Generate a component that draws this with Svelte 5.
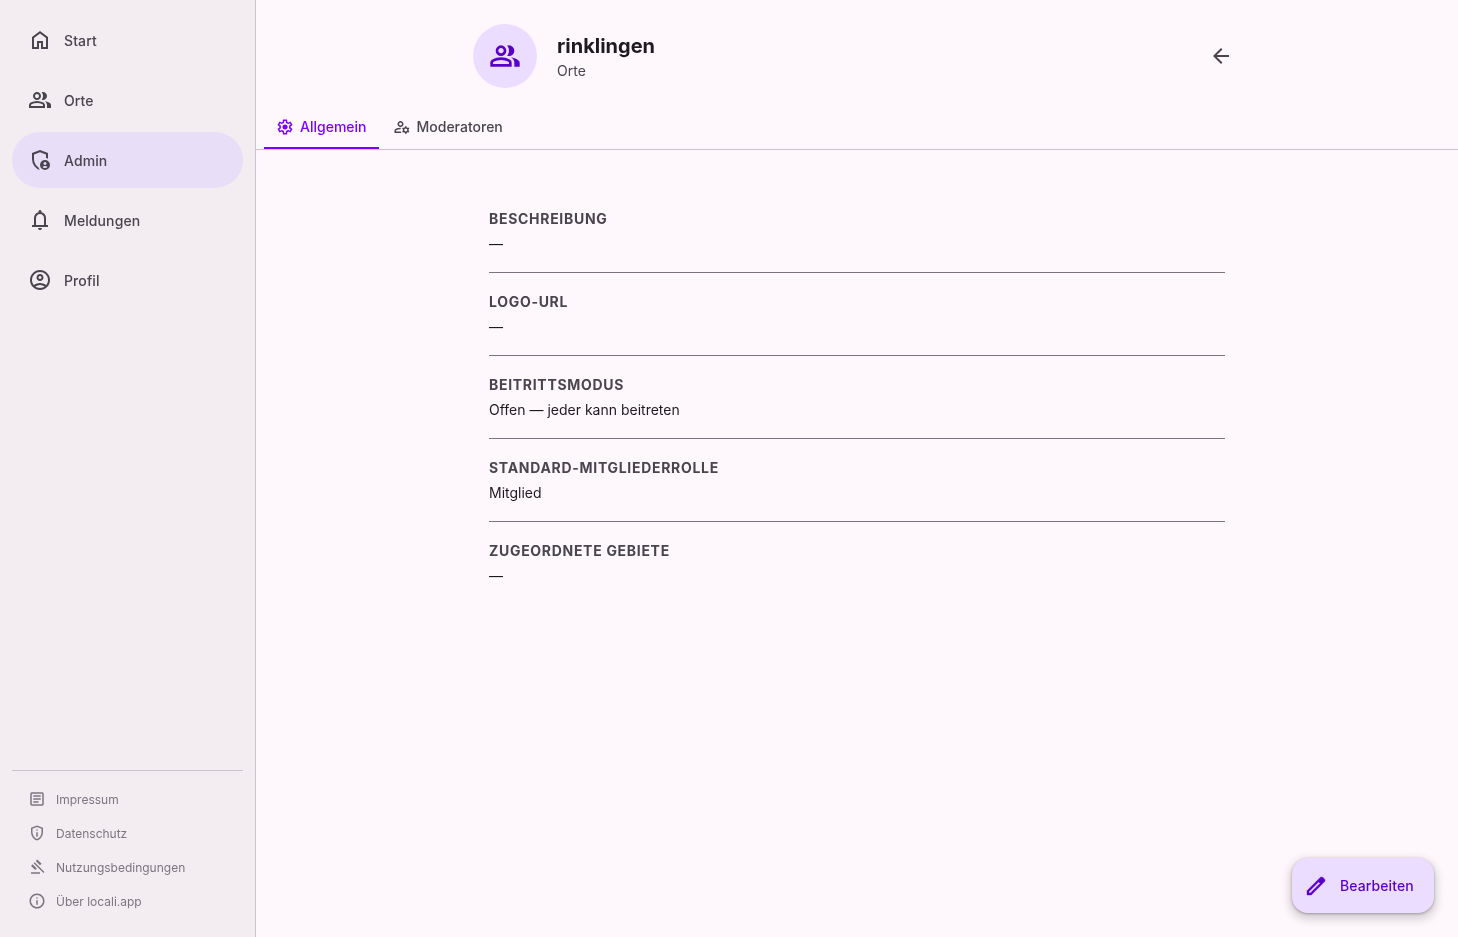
<script>
  const icons = {
    home: 'M240-200h120v-240h240v240h120v-360L480-740 240-560v360Zm-80 80v-480l320-240 320 240v480H520v-240h-80v240H160Z',
    group: 'M40-160v-112q0-34 17.5-62.5T104-378q62-31 126-46.5T360-440q66 0 130 15.5T616-378q29 15 46.5 43.5T680-272v112H40Zm720 0v-120q0-44-24.5-84.5T666-434q51 6 96 20.5t84 35.5q36 20 55 44.5t19 53.5v120H760ZM360-480q-66 0-113-47t-47-113q0-66 47-113t113-47q66 0 113 47t47 113q0 66-47 113t-113 47Zm400-160q0 66-47 113t-113 47q-11 0-28-2.5t-28-5.5q27-32 41.5-71t14.5-81q0-42-14.5-81T544-792q14-5 28-6.5t28-1.5q66 0 113 47t47 113ZM120-240h480v-32q0-11-5.5-20T580-306q-54-27-109-40.5T360-360q-56 0-111 13.5T140-306q-9 5-14.5 14t-5.5 20v32Zm240-320q33 0 56.5-23.5T440-640q0-33-23.5-56.5T360-720q-33 0-56.5 23.5T280-640q0 33 23.5 56.5T360-560Z',
    admin: 'M680-280q25 0 42.5-17.5T740-340q0-25-17.5-42.5T680-400q-25 0-42.5 17.5T620-340q0 25 17.5 42.5T680-280Zm0 120q31 0 57-14.5t42-38.5q-22-13-47-20t-52-7q-27 0-52 7t-47 20q16 24 42 38.5t57 14.5ZM480-80q-139-35-229.5-159.5T160-516v-244l320-120 320 120v227q-19-8-39-14.5t-41-9.5v-147l-240-90-240 90v188q0 47 12.5 94t35 89.5Q310-290 342-254t71 60q11 32 29 61t41 52q-1 0-1.5.5t-1.5.5Zm200 0q-83 0-141.5-58.5T480-280q0-83 58.5-141.5T680-480q83 0 141.5 58.5T880-280q0 83-58.5 141.5T680-80ZM480-494Z',
    bell: 'M160-200v-80h80v-280q0-83 50-147.5T420-792v-28q0-25 17.5-42.5T480-880q25 0 42.5 17.5T540-820v28q80 20 130 84.5T720-560v280h80v80H160Zm320-300Zm0 420q-33 0-56.5-23.5T400-160h160q0 33-23.5 56.5T480-80ZM320-280h320v-280q0-66-47-113t-113-47q-66 0-113 47t-47 113v280Z',
    account: 'M234-276q51-39 114-61.5T480-360q69 0 132 22.5T726-276q35-41 54.5-93T800-480q0-133-93.5-226.5T480-800q-133 0-226.5 93.5T160-480q0 59 19.5 111t54.5 93Zm246-164q-59 0-99.5-40.5T340-580q0-59 40.5-99.5T480-720q59 0 99.5 40.5T620-580q0 59-40.5 99.5T480-440Zm0 360q-83 0-156-31.5T197-197q-54-54-85.5-127T80-480q0-83 31.5-156T197-763q54-54 127-85.5T480-880q83 0 156 31.5T763-763q54 54 85.5 127T880-480q0 83-31.5 156T763-197q-54 54-127 85.5T480-80Zm0-80q53 0 100-15.5t86-44.5q-39-29-86-44.5T480-280q-53 0-100 15.5T294-220q39 29 86 44.5T480-160Zm0-360q26 0 43-17t17-43q0-26-17-43t-43-17q-26 0-43 17t-17 43q0 26 17 43t43 17Zm0-60Zm0 360Z',
    article: 'M280-280h280v-80H280v80Zm0-160h400v-80H280v80Zm0-160h400v-80H280v80Zm-80 480q-33 0-56.5-23.5T120-200v-560q0-33 23.5-56.5T200-840h560q33 0 56.5 23.5T840-760v560q0 33-23.5 56.5T760-120H200Zm0-80h560v-560H200v560Zm0-560v560-560Z',
    privacy: 'M440-280h80v-240h-80v240Zm40-320q17 0 28.5-11.5T520-640q0-17-11.5-28.5T480-680q-17 0-28.5 11.5T440-640q0 17 11.5 28.5T480-600Zm0 520q-139-35-229.5-159.5T160-516v-244l320-120 320 120v244q0 152-90.5 276.5T480-80Zm0-84q104-33 172-132t68-220v-189l-240-90-240 90v189q0 121 68 220t172 132Zm0-316Z',
    gavel: 'M160-120v-80h480v80H160Zm226-194L160-540l84-86 228 226-86 86Zm254-254L414-796l86-84 226 226-86 86Zm184 408L302-682l56-56 522 522-56 56Z',
    info: 'M440-280h80v-240h-80v240Zm40-320q17 0 28.5-11.5T520-640q0-17-11.5-28.5T480-680q-17 0-28.5 11.5T440-640q0 17 11.5 28.5T480-600Zm0 520q-83 0-156-31.5T197-197q-54-54-85.5-127T80-480q0-83 31.5-156T197-763q54-54 127-85.5T480-880q83 0 156 31.5T763-763q54 54 85.5 127T880-480q0 83-31.5 156T763-197q-54 54-127 85.5T480-80Zm0-80q134 0 227-93t93-227q0-134-93-227t-227-93q-134 0-227 93t-93 227q0 134 93 227t227 93Zm0-320Z',
    settings: 'm370-80-16-128q-13-5-24.5-12T307-235l-119 50L78-375l103-78q-1-7-1-13.5v-27q0-6.5 1-13.5L78-585l110-190 119 50q11-8 23-15t24-12l16-128h220l16 128q13 5 24.5 12t22.5 15l119-50 110 190-103 78q1 7 1 13.5v27q0 6.5-2 13.5l103 78-110 190-118-50q-11 8-23 15t-24 12L590-80H370Zm70-80h79l14-106q31-8 57.5-23.5T639-327l99 41 39-68-86-65q5-14 7-29.5t2-31.5q0-16-2-31.5t-7-29.5l86-65-39-68-99 42q-22-23-48.5-38.5T533-694l-13-106h-79l-14 106q-31 8-57.5 23.5T321-633l-99-41-39 68 86 64q-5 15-7 30t-2 32q0 16 2 31t7 30l-86 65 39 68 99-42q22 23 48.5 38.5T427-266l13 106Zm42-180q58 0 99-41t41-99q0-58-41-99t-99-41q-59 0-99.5 41T342-480q0 58 40.5 99t99.5 41Zm-2-140Z',
    manage: 'M400-480q-66 0-113-47t-47-113q0-66 47-113t113-47q66 0 113 47t47 113q0 66-47 113t-113 47ZM80-160v-112q0-33 17-62t47-44q51-26 115-44t141-18h14q6 0 12 2-8 18-13.5 37.5T404-360h-4q-71 0-127.5 18T180-306q-9 5-14.5 14t-5.5 20v32h252q6 21 16 41.5t22 38.5H80Zm560 40-12-60q-12-5-22.5-10.5T584-204l-58 18-40-68 46-40q-2-14-2-26t2-26l-46-40 40-68 58 18q11-8 21.5-13.5T628-460l12-60h80l12 60q12 5 22.5 11t21.5 15l58-20 40 70-46 40q2 12 2 25t-2 25l46 40-40 68-58-18q-11 8-21.5 13.5T732-180l-12 60h-80Zm40-120q33 0 56.5-23.5T760-320q0-33-23.5-56.5T680-400q-33 0-56.5 23.5T600-320q0 33 23.5 56.5T680-240ZM400-560q33 0 56.5-23.5T480-640q0-33-23.5-56.5T400-720q-33 0-56.5 23.5T320-640q0 33 23.5 56.5T400-560Zm0-80Zm12 400Z',
    edit: 'M200-200h57l391-391-57-57-391 391v57Zm-80 80v-170l528-527q12-11 26.5-17t30.5-6q16 0 31 6t26 18l55 56q12 11 17.5 26t5.5 30q0 16-5.5 30.5T817-647L290-120H120Zm640-584-56-56 56 56Zm-141 85-28-29 57 57-29-28Z',
    back: 'm313-440 224 224-57 56-320-320 320-320 57 56-224 224h487v80H313Z'
  };

  const nav = [
    { label: 'Start', icon: 'home' },
    { label: 'Orte', icon: 'group' },
    { label: 'Admin', icon: 'admin', active: true },
    { label: 'Meldungen', icon: 'bell' },
    { label: 'Profil', icon: 'account' }
  ];
  const legal = [
    { label: 'Impressum', icon: 'article' },
    { label: 'Datenschutz', icon: 'privacy' },
    { label: 'Nutzungsbedingungen', icon: 'gavel' },
    { label: 'Über locali.app', icon: 'info' }
  ];
  const fields = [
    { label: 'Beschreibung', value: '—' },
    { label: 'Logo-URL', value: '—' },
    { label: 'Beitrittsmodus', value: 'Offen — jeder kann beitreten' },
    { label: 'Standard-Mitgliederrolle', value: 'Mitglied' },
    { label: 'Zugeordnete Gebiete', value: '—' }
  ];
</script>

{#snippet icon(name, size)}
  <svg class="icon" width={size} height={size} viewBox="0 -960 960 960" fill="currentColor" aria-hidden="true"><path d={icons[name]} /></svg>
{/snippet}

<div class="shell">
  <aside class="sidebar">
    <nav class="nav">
      {#each nav as item}
        <a class="nav-item" class:active={item.active} href="#top">
          <span class="nav-icon">{@render icon(item.icon, 24)}</span>
          <span>{item.label}</span>
        </a>
      {/each}
    </nav>
    <div class="legal">
      {#each legal as item}
        <a class="legal-item" href="#top">
          {@render icon(item.icon, 18)}
          <span>{item.label}</span>
        </a>
      {/each}
    </div>
  </aside>

  <main class="main">
    <div class="wrap header">
      <div class="avatar">{@render icon('group', 32)}</div>
      <div class="titles">
        <h1>rinklingen</h1>
        <p>Orte</p>
      </div>
      <button class="back" aria-label="Zurück">{@render icon('back', 24)}</button>
    </div>

    <div class="tabs">
      <button class="tab selected">{@render icon('settings', 18)}<span>Allgemein</span></button>
      <button class="tab">{@render icon('manage', 18)}<span>Moderatoren</span></button>
    </div>

    <div class="wrap">
      <div class="fields">
        {#each fields as f}
          <section class="field">
            <h2>{f.label}</h2>
            <p>{f.value}</p>
          </section>
        {/each}
      </div>
    </div>

    <button class="fab">{@render icon('edit', 24)}<span>Bearbeiten</span></button>
  </main>
</div>

<style>
  :global(body) {
    margin: 0;
    background: #fef8fd;
  }
  .shell {
    display: flex;
    height: 937px;
    font-family: Inter, "Noto Sans", sans-serif;
    color: #1d1b20;
    will-change: transform;
    overflow: hidden;
  }
  .sidebar {
    flex: none;
    width: 231px;
    display: flex;
    flex-direction: column;
    justify-content: space-between;
    padding: 12px 12px 19px;
    background: #f3edf2;
    border-right: 1px solid #cac4d0;
  }
  .nav {
    display: flex;
    flex-direction: column;
    gap: 4px;
  }
  .nav-item {
    display: flex;
    align-items: center;
    gap: 12px;
    height: 56px;
    padding-left: 16px;
    border-radius: 28px;
    font-size: 14px;
    font-weight: 500;
    letter-spacing: 0.1px;
    color: #49454f;
    text-decoration: none;
  }
  .nav-item.active {
    background: #e8def8;
  }
  .nav-icon {
    display: flex;
  }
  .legal {
    border-top: 1px solid #cac4d0;
    padding-top: 11px;
    display: flex;
    flex-direction: column;
  }
  .legal-item {
    display: flex;
    align-items: center;
    gap: 10px;
    height: 34px;
    padding-left: 16px;
    font-size: 12px;
    color: #7b7680;
    text-decoration: none;
  }
  .icon {
    display: block;
    flex: none;
  }
  .main {
    flex: 1;
    position: relative;
    min-width: 0;
  }
  .wrap {
    box-sizing: border-box;
    width: 768px;
    margin: 0 auto;
  }
  .header {
    display: flex;
    align-items: center;
    gap: 20px;
    padding-top: 24px;
    box-sizing: content-box;
    height: 64px;
  }
  .avatar {
    width: 64px;
    height: 64px;
    border-radius: 50%;
    background: #eaddff;
    color: #5a00c8;
    display: flex;
    align-items: center;
    justify-content: center;
    flex: none;
  }
  .titles {
    flex: 1;
  }
  .titles h1 {
    margin: 0;
    font-size: 20px;
    line-height: 30px;
    font-weight: 700;
    color: #1d1b20;
  }
  .titles p {
    margin: 0;
    font-size: 14px;
    line-height: 20px;
    color: #49454f;
  }
  .back {
    width: 40px;
    height: 40px;
    display: flex;
    align-items: center;
    justify-content: center;
    border: 0;
    padding: 0;
    background: none;
    color: #49454f;
  }
  .tabs {
    display: flex;
    gap: 2px;
    margin-top: 14px;
    padding-left: 8px;
    border-bottom: 1px solid #cac4d0;
    height: 47px;
  }
  .tab {
    display: flex;
    align-items: center;
    gap: 6px;
    height: 47px;
    padding: 2px 12px 0;
    box-sizing: border-box;
    border: 0;
    background: none;
    font: 500 14px Inter, "Noto Sans", sans-serif;
    color: #49454f;
  }
  .tab.selected {
    color: #7f00ff;
    box-shadow: inset 0 -2px 0 #7f00ff;
  }
  .fields {
    padding: 56px 16px 0;
  }
  .field {
    box-sizing: content-box;
    height: 66px;
    margin-bottom: 16px;
    border-bottom: 1px solid #79747e;
  }
  .field:last-child {
    border-bottom: 0;
  }
  .field h2 {
    margin: 0;
    padding-top: 4px;
    font-size: 14px;
    line-height: 18px;
    font-weight: 650;
    letter-spacing: 0.7px;
    text-transform: uppercase;
    color: #49454f;
  }
  .field p {
    margin: 6px 0 0;
    font-size: 14px;
    line-height: 20px;
    color: #1d1b20;
  }
  .fab {
    position: absolute;
    right: 24px;
    bottom: 24px;
    height: 55px;
    width: 142px;
    box-sizing: border-box;
    display: flex;
    align-items: center;
    gap: 12px;
    padding: 0 20px 0 12px;
    border: 0;
    border-radius: 16px;
    background: #eaddff;
    color: #5a00c8;
    font: 500 14px Inter, "Noto Sans", sans-serif;
    letter-spacing: 0.1px;
    box-shadow: 0 1px 3px rgba(0, 0, 0, 0.3), 0 4px 8px 3px rgba(0, 0, 0, 0.15);
  }
  .fab .icon {
    stroke: currentColor;
    stroke-width: 16;
  }
</style>
